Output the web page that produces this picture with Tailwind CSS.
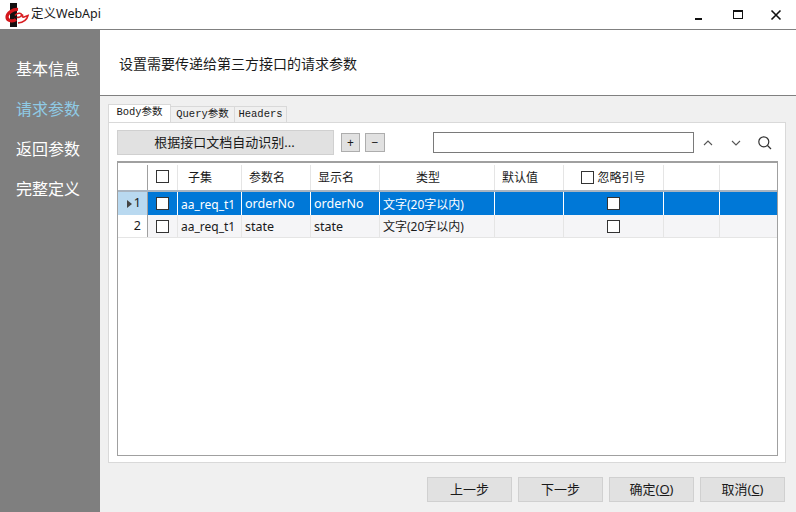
<!DOCTYPE html>
<html lang="zh">
<head>
    <meta charset="UTF-8">
    <title>定义WebApi</title>
    <script src="https://cdn.jsdelivr.net/npm/@tailwindcss/browser@4"></script>
</head>
<body class="bg-white font-['Noto_Sans','Noto_Sans_CJK_SC',sans-serif] text-[#1a1a1a] overflow-hidden">
    <div class="w-[796px] h-[512px] flex flex-col overflow-hidden">
        <!-- title bar -->
        <div class="h-[29px] flex items-center bg-white">
            <svg class="ml-[5px] w-[26px] h-[26px]" viewBox="0 0 26 26">
                <rect x="5" y="1" width="7" height="24" fill="#141010"/>
                <path d="M13 7.500C8 7 2 11 2 15c0 4 6 5 9 2.500" fill="none" stroke="#d4161c" stroke-width="3.200"/>
                <path d="M10 13.500c2-2.500 6-3 6.500-1s-3 3.500-4.500 2.500M18 12.500c-1 1.500-1 3 1 2.500l4-1.500c-1 4-5 7-10 7.500" fill="none" stroke="#d81e22" stroke-width="1.600"/>
            </svg>
            <span class="text-[12.5px] leading-none">定义WebApi</span>
            <div class="ml-auto flex items-center pr-[14px] gap-[26px]">
                <svg class="w-[12px] h-[12px]" viewBox="0 0 12 12"><rect x="1" y="9" width="7" height="2" fill="#111"/></svg>
                <svg class="w-[12px] h-[12px]" viewBox="0 0 12 12"><rect x="1.500" y="1.500" width="9" height="8" fill="none" stroke="#111" stroke-width="1"/><rect x="1" y="1" width="10" height="2" fill="#111"/></svg>
                <svg class="w-[12px] h-[12px]" viewBox="0 0 12 12"><path d="M1.500 1.500l9 9M10.500 1.500l-9 9" stroke="#111" stroke-width="1.600"/></svg>
            </div>
        </div>

        <div class="flex-1 flex min-h-0">
            <!-- side steps -->
            <div class="w-[100px] bg-[#7f7f7f] pt-[20px] pl-[16px] text-[16px] text-white">
                <div class="h-[40px] leading-[40px]">基本信息</div>
                <div class="h-[40px] leading-[40px] text-[#8fcbe6]">请求参数</div>
                <div class="h-[40px] leading-[40px]">返回参数</div>
                <div class="h-[40px] leading-[40px]">完整定义</div>
            </div>

            <div class="flex-1 flex flex-col border-t border-[#808080] min-w-0">
                <div class="h-[66px] bg-white border-b border-[#808080] pl-[19px] pt-[2px] flex items-center text-[14px]">设置需要传递给第三方接口的请求参数</div>

                <div class="flex-1 bg-[#f0f0f0] pl-[8px] pr-[10px] pt-[8px] flex flex-col min-h-0">
                    <!-- tabs -->
                    <div class="h-[19px] flex items-end font-['Liberation_Mono','Noto_Sans_CJK_SC',monospace] text-[10.5px]">
                        <div class="w-[63px] h-[19px] bg-white border border-b-0 border-[#d9d9d9] flex items-center justify-center pb-[2px]">Body参数</div>
                        <div class="w-[64px] h-[17px] bg-[#f0f0f0] border-t border-r border-[#d9d9d9] flex items-center justify-center">Query参数</div>
                        <div class="w-[52px] h-[17px] bg-[#f0f0f0] border-t border-r border-[#d9d9d9] flex items-center justify-center">Headers</div>
                    </div>

                    <div class="w-[678px] h-[341px] bg-white border border-[#d9d9d9] -mt-px pl-[8px] pr-[7px] pt-[7px] flex flex-col">
                        <!-- toolbar -->
                        <div class="h-[25px] flex items-center text-[13px]">
                            <div class="w-[217px] h-[25px] bg-[#e1e1e1] border border-[#d0d0d0] flex items-center justify-center pr-[2px]">根据接口文档自动识别...</div>
                            <div class="ml-[7px] w-[19px] h-[19px] bg-[#e1e1e1] border border-[#adadad] flex items-center justify-center text-[12px]">+</div>
                            <div class="ml-[5px] w-[20px] h-[19px] bg-[#e1e1e1] border border-[#adadad] flex items-center justify-center text-[12px]">−</div>
                            <div class="ml-[48px] w-[261px] h-[21px] bg-white border border-[#7a7a7a]"></div>
                            <svg class="ml-[8px] w-[12px] h-[12px]" viewBox="0 0 12 12"><path d="M2 8l4-4 4 4" fill="none" stroke="#555" stroke-width="1.100"/></svg>
                            <svg class="ml-[16px] w-[12px] h-[12px]" viewBox="0 0 12 12"><path d="M2 4l4 4 4-4" fill="none" stroke="#555" stroke-width="1.100"/></svg>
                            <svg class="ml-[15px] w-[15px] h-[15px]" viewBox="0 0 15 15"><circle cx="6.800" cy="6.800" r="5" fill="none" stroke="#333" stroke-width="1.200"/><path d="M10.500 10.500l3.500 3.500" stroke="#333" stroke-width="1.300"/></svg>
                        </div>

                        <!-- grid -->
                        <div class="mt-[6px] w-[661px] h-[295px] bg-white border border-t-2 border-[#a0a0a0] text-[12.5px]">
                            <div class="h-[29px] grid grid-cols-[30px_30px_64px_69px_69px_115px_69px_100px_56px_58px] border-b-2 border-[#a9b4c0] text-[12px] pt-[2px]">
                                <div class="border-r border-[#a0a0a0]"></div>
                                <div class="border-r border-[#e5e5e5] flex items-center justify-center pb-[2px]"><span class="w-[13px] h-[13px] border border-[#333] bg-white"></span></div>
                                <div class="border-r border-[#e5e5e5] flex items-center pl-[10px]">子集</div>
                                <div class="border-r border-[#e5e5e5] flex items-center pl-[7px]">参数名</div>
                                <div class="border-r border-[#e5e5e5] flex items-center pl-[7px]">显示名</div>
                                <div class="border-r border-[#e5e5e5] flex items-center pl-[36px]">类型</div>
                                <div class="border-r border-[#e5e5e5] flex items-center pl-[7px]">默认值</div>
                                <div class="border-r border-[#e5e5e5] flex items-center justify-center"><span class="w-[13px] h-[13px] border border-[#333] bg-white mr-[3px]"></span>忽略引号</div>
                                <div class="border-r border-[#e5e5e5]"></div>
                                <div></div>
                            </div>
                            <div class="h-[23px] grid grid-cols-[30px_30px_64px_69px_69px_115px_69px_100px_56px_58px] text-white bg-[#0078d7]">
                                <div class="bg-[#b9d9f0] text-[#1a1a1a] border-r border-[#a0a0a0] flex items-center justify-end pr-[6px]"><span class="w-0 h-0 border-y-[4px] border-y-transparent border-l-[5px] border-l-[#444] mr-[2px]"></span>1</div>
                                <div class="border-r border-white flex items-center justify-center"><span class="w-[13px] h-[13px] border border-[#333] bg-white"></span></div>
                                <div class="border-r border-white flex items-center pl-[3px] pt-[2px] text-[12px]">aa_req_t1</div>
                                <div class="border-r border-white flex items-center pl-[3px] pt-[2px]">orderNo</div>
                                <div class="border-r border-white flex items-center pl-[3px] pt-[2px]">orderNo</div>
                                <div class="border-r border-white flex items-center pl-[3px] pt-[2px] text-[12px]">文字(20字以内)</div>
                                <div class="border-r border-white"></div>
                                <div class="border-r border-white flex items-center justify-center"><span class="w-[13px] h-[13px] border border-[#333] bg-white"></span></div>
                                <div class="border-r border-white"></div>
                                <div></div>
                            </div>
                            <div class="h-[23px] grid grid-cols-[30px_30px_64px_69px_69px_115px_69px_100px_56px_58px] bg-[#f5f5f7] border-b border-[#e5e5e5]">
                                <div class="bg-white border-r border-[#a0a0a0] flex items-center justify-end pr-[6px]">2</div>
                                <div class="border-r border-[#e5e5e5] flex items-center justify-center"><span class="w-[13px] h-[13px] border border-[#333] bg-white"></span></div>
                                <div class="border-r border-[#e5e5e5] flex items-center pl-[3px] pt-[2px] text-[12px]">aa_req_t1</div>
                                <div class="border-r border-[#e5e5e5] flex items-center pl-[3px] pt-[2px]">state</div>
                                <div class="border-r border-[#e5e5e5] flex items-center pl-[3px] pt-[2px]">state</div>
                                <div class="border-r border-[#e5e5e5] flex items-center pl-[3px] pt-[2px] text-[12px]">文字(20字以内)</div>
                                <div class="border-r border-[#e5e5e5]"></div>
                                <div class="border-r border-[#e5e5e5] flex items-center justify-center"><span class="w-[13px] h-[13px] border border-[#333] bg-white"></span></div>
                                <div class="border-r border-[#e5e5e5]"></div>
                                <div></div>
                            </div>
                        </div>
                    </div>

                    <!-- footer buttons -->
                    <div class="mt-[14px] flex justify-end gap-[6px] pr-px text-[13px]">
                        <div class="w-[85px] h-[25px] bg-[#e1e1e1] border border-[#d0d0d0] flex items-center justify-center">上一步</div>
                        <div class="w-[85px] h-[25px] bg-[#e1e1e1] border border-[#d0d0d0] flex items-center justify-center">下一步</div>
                        <div class="w-[85px] h-[25px] bg-[#e1e1e1] border border-[#d0d0d0] flex items-center justify-center"><span>确定(<u>O</u>)</span></div>
                        <div class="w-[85px] h-[25px] bg-[#e1e1e1] border border-[#d0d0d0] flex items-center justify-center"><span>取消(<u>C</u>)</span></div>
                    </div>
                </div>
            </div>
        </div>
    </div>
</body>
</html>
